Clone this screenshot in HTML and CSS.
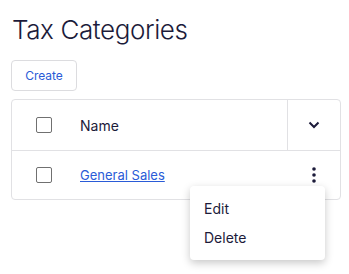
FILE: index.html
```html
<!DOCTYPE html>
<html lang="en">
<head>
  <meta charset="UTF-8">
  <title>Tax Categories</title>
  <link rel="stylesheet" href="styles.css">
</head>
<body>

<div class="page">
  <h1>Tax Categories</h1>

  <button class="create-btn">Create</button>

  <div class="table-box">
    <div class="row head-row">
      <div class="cell check-cell"><span class="checkbox"></span></div>
      <div class="cell name-cell">Name</div>
      <div class="cell action-cell divided">
        <svg width="12" height="8" viewBox="0 0 12 8"><path d="M1.5 1.5 L6 6 L10.5 1.5" fill="none" stroke="#1c1b3a" stroke-width="2"/></svg>
      </div>
    </div>
    <div class="row">
      <div class="cell check-cell"><span class="checkbox"></span></div>
      <div class="cell name-cell"><a href="#">General Sales</a></div>
      <div class="cell action-cell">
        <svg width="4" height="16" viewBox="0 0 4 16"><circle cx="2" cy="2" r="1.8" fill="#1c1b3a"/><circle cx="2" cy="8" r="1.8" fill="#1c1b3a"/><circle cx="2" cy="14" r="1.8" fill="#1c1b3a"/></svg>
      </div>
    </div>
  </div>

  <ul class="menu">
    <li>Edit</li>
    <li>Delete</li>
  </ul>
</div>

</body>
</html>
```

FILE: styles.css
```css
html, body { height: 100%; }
body { margin: 0; font-family: Inter, "Noto Sans", sans-serif; color: #1c1b3a; background: #fff; }
.page { position: relative; min-height: 100%; padding: 13px 8px 0 11px; box-sizing: border-box; }
h1 { margin: 0 0 13px 1px; font-size: 26px; font-weight: 300; line-height: 34px; letter-spacing: -0.4px; }
.create-btn { display: block; font-family: inherit; font-size: 12px; color: #2a5bd7; background: #fff; border: 1px solid #dcdcdf; border-radius: 4px; width: 66px; height: 31px; padding: 0; margin-bottom: 8px; }
.table-box { border: 1px solid #e1e1e4; border-radius: 4px; width: 328px; }
.row { display: flex; height: 48px; }
.head-row { height: 50px; border-bottom: 1px solid #e1e1e4; }
.cell { display: flex; align-items: center; }
.check-cell { width: 68px; padding-left: 24px; box-sizing: border-box; }
.checkbox { width: 14px; height: 14px; border: 1px solid #707070; border-radius: 2px; }
.name-cell { flex: 1; font-size: 14px; }
.name-cell a { color: #2a5bd7; font-size: 13px; text-decoration: underline; }
.action-cell { width: 52px; justify-content: center; }
.divided { border-left: 1px solid #e1e1e4; }
.menu { position: absolute; left: 190px; top: 186px; width: 135px; margin: 0; padding: 8px 0; list-style: none; background: #fff; border-radius: 4px; box-shadow: 0 3px 8px rgba(0,0,0,0.22); font-size: 14px; }
.menu li { padding: 0 14px; line-height: 29px; }
```
